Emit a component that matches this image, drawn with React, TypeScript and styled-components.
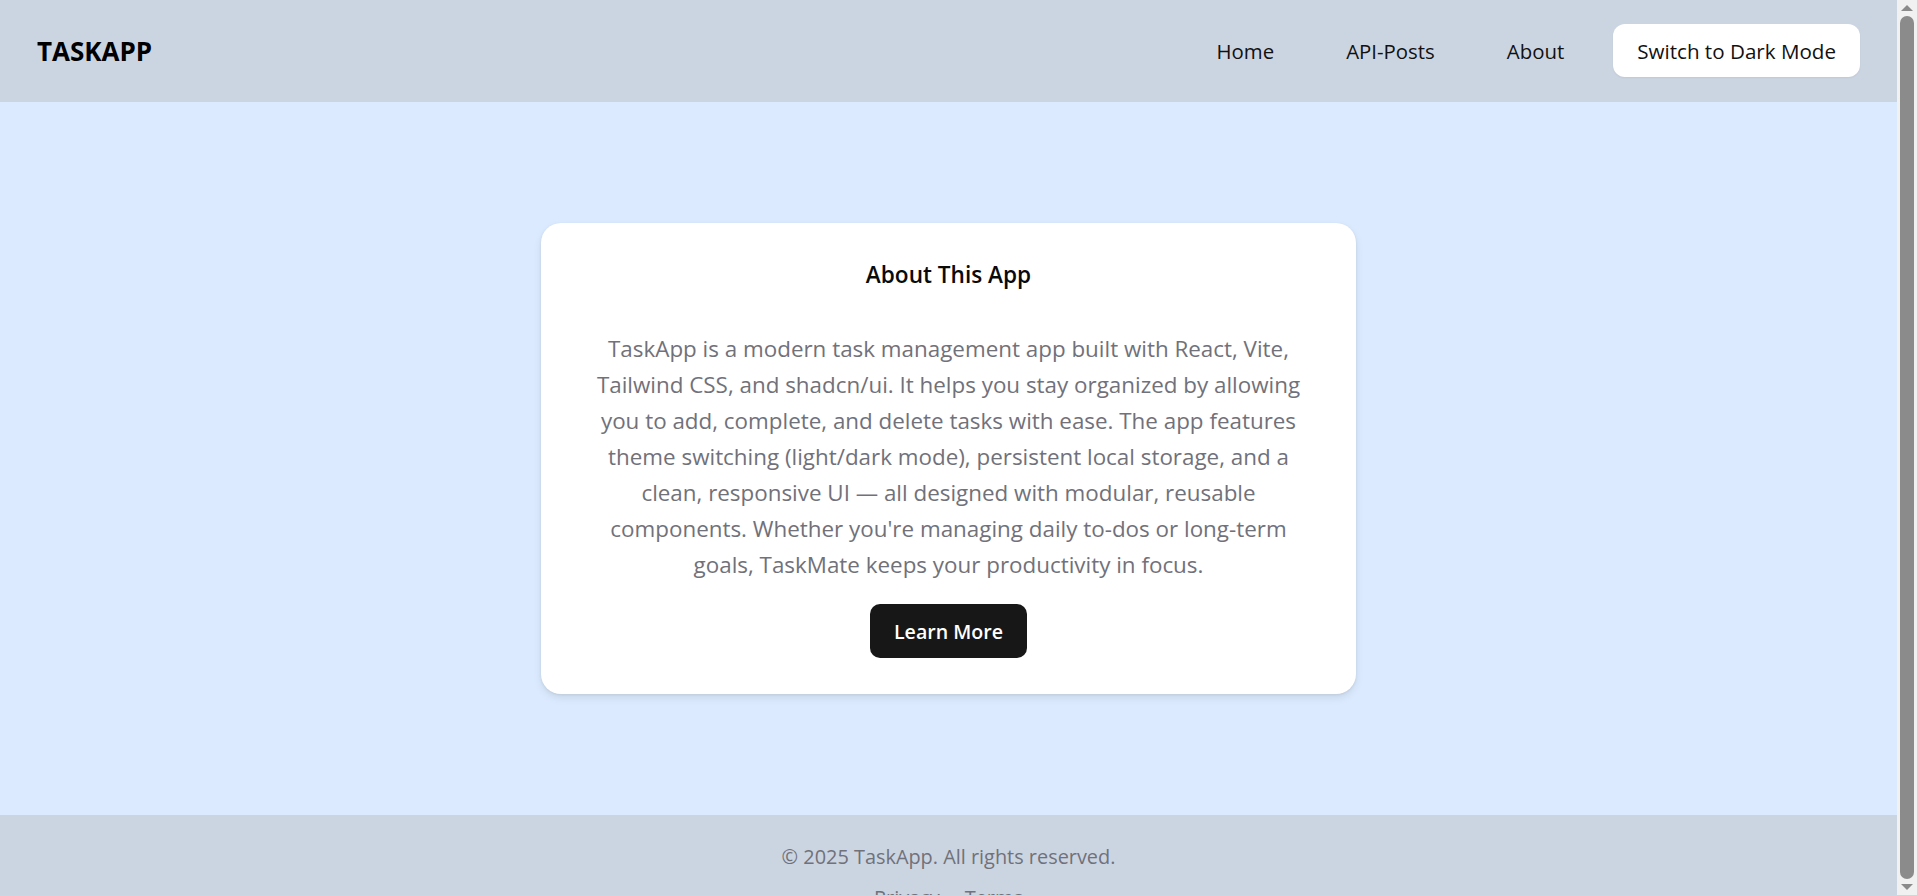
import React from "react";
import styled, { createGlobalStyle } from "styled-components";

const GlobalStyle = createGlobalStyle`
  html,
  body {
    margin: 0;
    padding: 0;
    background: #dbeafe;
    font-family: "Segoe UI", "Open Sans", "Noto Sans", sans-serif;
  }

  *,
  *::before,
  *::after {
    box-sizing: border-box;
  }
`;

const Page = styled.div`
  display: flex;
  flex-direction: column;
  min-height: 100vh;
  margin-right: 20px;
`;

const Header = styled.header`
  display: flex;
  align-items: center;
  justify-content: space-between;
  padding: 24px 37px 25px;
  background: #cbd5e1;
`;

const Brand = styled.div`
  font-size: 26px;
  font-weight: 700;
  color: #000;
`;

const Nav = styled.nav`
  display: flex;
  align-items: center;
  gap: 38px;
`;

const NavLinks = styled.div`
  display: flex;
  align-items: center;
  gap: 50px;
`;

const NavLink = styled.a`
  padding: 0 11px;
  font-size: 20.4px;
  font-weight: 500;
  color: #111;
  text-decoration: none;
  cursor: pointer;
`;

const ThemeButton = styled.button`
  height: 53px;
  padding: 0 24px;
  border: none;
  border-radius: 12px;
  background: #fff;
  box-shadow: 0 1px 2px rgba(0, 0, 0, 0.06);
  font-family: inherit;
  font-size: 20.6px;
  font-weight: 500;
  color: #111;
  cursor: pointer;
`;

const Main = styled.main`
  display: flex;
  align-items: center;
  justify-content: center;
  height: 713px;
  background: #dbeafe;
`;

const Card = styled.section`
  display: flex;
  flex-direction: column;
  align-items: center;
  width: 815px;
  padding: 35px 35px 36px;
  border-radius: 20px;
  background: #fff;
  box-shadow: 0 4px 8px rgba(0, 0, 0, 0.08), 0 1px 3px rgba(0, 0, 0, 0.08);
  text-align: center;
`;

const Title = styled.h2`
  margin: 0 0 39px;
  font-size: 22.6px;
  line-height: 34px;
  font-weight: 600;
  color: #0a0a0a;
`;

const Text = styled.p`
  margin: 0;
  font-size: 22.4px;
  line-height: 36px;
  color: #71717a;
  white-space: nowrap;
`;

const LearnButton = styled.button`
  height: 54px;
  margin-top: 21px;
  padding: 0 23.5px;
  border: none;
  border-radius: 10px;
  background: #171717;
  font-family: inherit;
  font-size: 19.6px;
  font-weight: 600;
  color: #fff;
  cursor: pointer;
`;

const Footer = styled.footer`
  padding: 27px 0;
  background: #cbd5e1;
  text-align: center;
  font-size: 19.9px;
  line-height: 29px;
  color: #71717a;
`;

const FooterLinks = styled.div`
  display: flex;
  justify-content: center;
  gap: 25px;
  margin-top: 12px;
`;

const FooterLink = styled.a`
  color: #71717a;
  text-decoration: none;
  cursor: pointer;
`;

/* stand-in for the browser's classic scrollbar, which lies over the right edge */
const Scrollbar = styled.div`
  position: fixed;
  top: 0;
  right: 0;
  bottom: 0;
  width: 20px;
  display: flex;
  flex-direction: column;
  align-items: center;
  justify-content: space-between;
  padding: 5px 0;
  background: #f1f1f1;
`;

const Thumb = styled.div`
  flex: 1;
  width: 14px;
  margin: 5px 0;
  border-radius: 7px;
  background: #8b8b8b;
`;

const Arrow = styled.div<{ $down?: boolean }>`
  width: 0;
  height: 0;
  border-left: 6px solid transparent;
  border-right: 6px solid transparent;
  ${({ $down }) =>
    $down ? "border-top: 6px solid #8b8b8b;" : "border-bottom: 6px solid #8b8b8b;"}
`;

const lines = [
  "TaskApp is a modern task management app built with React, Vite,",
  "Tailwind CSS, and shadcn/ui. It helps you stay organized by allowing",
  "you to add, complete, and delete tasks with ease. The app features",
  "theme switching (light/dark mode), persistent local storage, and a",
  "clean, responsive UI \u2014 all designed with modular, reusable",
  "components. Whether you're managing daily to-dos or long-term",
  "goals, TaskMate keeps your productivity in focus.",
];

export default function App() {
  return (
    <>
      <GlobalStyle />
      <Page>
        <Header>
          <Brand>TASKAPP</Brand>
          <Nav>
            <NavLinks>
              <NavLink>Home</NavLink>
              <NavLink>API-Posts</NavLink>
              <NavLink>About</NavLink>
            </NavLinks>
            <ThemeButton>Switch to Dark Mode</ThemeButton>
          </Nav>
        </Header>
        <Main>
          <Card>
            <Title>About This App</Title>
            <Text>
              {lines.map((line, i) => (
                <React.Fragment key={i}>
                  {line}
                  {i < lines.length - 1 && <br />}
                </React.Fragment>
              ))}
            </Text>
            <LearnButton>Learn More</LearnButton>
          </Card>
        </Main>
        <Footer>
          <div>© 2025 TaskApp. All rights reserved.</div>
          <FooterLinks>
            <FooterLink>Privacy</FooterLink>
            <FooterLink>Terms</FooterLink>
          </FooterLinks>
        </Footer>
      </Page>
      <Scrollbar>
        <Arrow />
        <Thumb />
        <Arrow $down />
      </Scrollbar>
    </>
  );
}
